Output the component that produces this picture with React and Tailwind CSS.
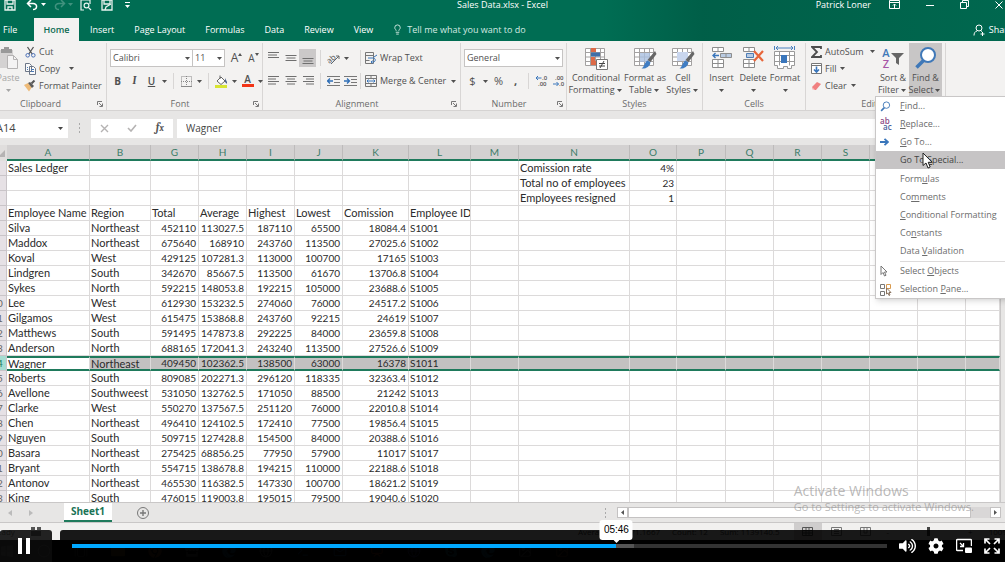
import { useState } from 'react';
import { FaCog, FaVolumeUp, FaWindows, FaChrome, FaEdge, FaFolder, FaSkype, FaStore } from 'react-icons/fa';
import { Circle, GalleryHorizontal, Terminal, Mail, Presentation, Globe, Image, Lightbulb } from 'lucide-react';

const COLUMNS = [
  { name: 'A', width: 'w-[83px]' },
  { name: 'B', width: 'w-[61px]' },
  { name: 'G', width: 'w-[48px]' },
  { name: 'H', width: 'w-[48px]' },
  { name: 'I', width: 'w-[48px]' },
  { name: 'J', width: 'w-[48px]' },
  { name: 'K', width: 'w-[66px]' },
  { name: 'L', width: 'w-[62px]' },
  { name: 'M', width: 'w-[48px]' },
  { name: 'N', width: 'w-[111px]' },
  { name: 'O', width: 'w-[47px]' },
  { name: 'P', width: 'w-[49px]' },
  { name: 'Q', width: 'w-[48px]' },
  { name: 'R', width: 'w-[48px]' },
  { name: 'S', width: 'w-[48px]' },
  { name: 'T', width: 'w-[48px]' },
  { name: 'U', width: 'w-[48px]' },
  { name: 'V', width: '' },
];

const ROWS = [
  ['Sales Ledger', '', '', '', '', '', '', '', '', 'Comission rate', '4%'],
  ['', '', '', '', '', '', '', '', '', 'Total no of employees', '23'],
  ['', '', '', '', '', '', '', '', '', 'Employees resigned', '1'],
  ['Employee Name', 'Region', 'Total', 'Average', 'Highest', 'Lowest', 'Comission', 'Employee ID'],
  ['Silva', 'Northeast', '452110', '113027.5', '187110', '65500', '18084.4', 'S1001'],
  ['Maddox', 'Northeast', '675640', '168910', '243760', '113500', '27025.6', 'S1002'],
  ['Koval', 'West', '429125', '107281.3', '113000', '100700', '17165', 'S1003'],
  ['Lindgren', 'South', '342670', '85667.5', '113500', '61670', '13706.8', 'S1004'],
  ['Sykes', 'North', '592215', '148053.8', '192215', '105000', '23688.6', 'S1005'],
  ['Lee', 'West', '612930', '153232.5', '274060', '76000', '24517.2', 'S1006'],
  ['Gilgamos', 'West', '615475', '153868.8', '243760', '92215', '24619', 'S1007'],
  ['Matthews', 'South', '591495', '147873.8', '292225', '84000', '23659.8', 'S1008'],
  ['Anderson', 'North', '688165', '172041.3', '243240', '113500', '27526.6', 'S1009'],
  ['Wagner', 'Northeast', '409450', '102362.5', '138500', '63000', '16378', 'S1011'],
  ['Roberts', 'South', '809085', '202271.3', '296120', '118335', '32363.4', 'S1012'],
  ['Avellone', 'Southweest', '531050', '132762.5', '171050', '88500', '21242', 'S1013'],
  ['Clarke', 'West', '550270', '137567.5', '251120', '76000', '22010.8', 'S1014'],
  ['Chen', 'Northeast', '496410', '124102.5', '172410', '77500', '19856.4', 'S1015'],
  ['Nguyen', 'South', '509715', '127428.8', '154500', '84000', '20388.6', 'S1016'],
  ['Basara', 'Northeast', '275425', '68856.25', '77950', '57900', '11017', 'S1017'],
  ['Bryant', 'North', '554715', '138678.8', '194215', '110000', '22188.6', 'S1018'],
  ['Antonov', 'Northeast', '465530', '116382.5', '147330', '100700', '18621.2', 'S1019'],
  ['King', 'South', '476015', '119003.8', '195015', '79500', '19040.6', 'S1020'],
];

const SELECTED_ROW = 14;

function Caret({ className = '' }) {
  return (
    <span className={`flex w-[9px] shrink-0 items-center justify-center ${className}`}>
      <svg width="5" height="3" viewBox="0 0 5 3"><path d="M0 0h5L2.5 3z" fill="currentColor" /></svg>
    </span>
  );
}

function Sep() {
  return <span className="mx-1 h-4 w-px shrink-0 bg-[#d8d6d5]" />;
}

function Tool({ label, className = '', children }) {
  return (
    <button type="button" aria-label={label} className={`flex h-[18px] w-[17px] shrink-0 items-center justify-center ${className}`}>
      {children}
    </button>
  );
}

function Group({ title, width, launcher, labelClass = '', children }) {
  return (
    <section className={`flex h-[69px] shrink-0 flex-col pt-[2px] ${width}`}>
      <div className="flex grow border-r border-[#d8d6d5]">{children}</div>
      <div className="flex h-3 items-center border-r border-[#d8d6d5] leading-3 text-[#6b6b6b]">
        <span className={`grow text-center ${labelClass}`}>{title}</span>
        {launcher && (
          <button type="button" aria-label={`${title} settings`} className="mr-[3px]">
            <svg width="6" height="6" viewBox="0 0 6 6" fill="none" stroke="#777"><path d="M.5 4V.5H5M2 2l3 3M5.500 2.500v3h-3" /></svg>
          </button>
        )}
      </div>
    </section>
  );
}

function BigButton({ icon, lines, width, inlineCaret, active }) {
  return (
    <button type="button" className={`flex h-[53px] shrink-0 flex-col items-center pt-[3px] leading-3 ${width} ${active ? 'bg-[#c8c6c6]' : ''}`}>
      {icon}
      <span className="mt-[2px] whitespace-nowrap">{lines[0]}</span>
      <span className="flex h-3 items-center whitespace-nowrap">{lines[1]}<Caret className={inlineCaret ? '' : 'mt-px'} /></span>
    </button>
  );
}

function Picker({ label, value, width }) {
  return (
    <span className={`flex h-[18px] items-center border border-[#c6c4c3] bg-white ${width}`}>
      <select aria-label={label} className="h-4 min-w-0 grow appearance-none bg-transparent pl-[2px] outline-none">
        <option>{value}</option>
      </select>
      <Caret />
    </span>
  );
}

function Lines({ widths, align = 'left', top = 2 }) {
  return (
    <svg width="12" height="12" viewBox="0 0 12 12" stroke="#6f6f6f">
      {widths.map((w, i) => {
        const x = align === 'left' ? 0 : align === 'right' ? 12 - w : (12 - w) / 2;
        return <path key={i} d={`M${x} ${top + i * 2.5 + 0.5}h${w}`} />;
      })}
    </svg>
  );
}

function IndentIcon({ flip }) {
  return (
    <svg width="13" height="12" viewBox="0 0 13 12" fill="none">
      <path d="M0 1.500h13M7 4.500h6M7 7.500h6M0 10.500h13" stroke="#777" />
      <path d={flip ? 'M0 6h5M3 3.500 5.500 6 3 8.500' : 'M1 6h5M3 3.500.500 6 3 8.500'} stroke="#2f6fb7" strokeWidth="1.300" />
    </svg>
  );
}

function PasteIcon() {
  return (
    <svg width="20" height="24" viewBox="0 0 20 24">
      <path d="M1 4h14v18H1z" fill="#d4d2d2" />
      <path d="M3 3h3V1h5v2h3v4H3z" fill="#999" />
      <path d="M9.500 9.500h6l4 4v9h-10z" fill="#f4f3f3" stroke="#b5b3b3" />
      <path d="M15.500 9.500v4h4" fill="none" stroke="#b5b3b3" />
    </svg>
  );
}

function CutIcon() {
  return (
    <svg width="11" height="12" viewBox="0 0 11 12" fill="none">
      <path d="M2.500 1l4.700 7M8.500 1L3.800 8" stroke="#555" strokeWidth="1.300" />
      <circle cx="2.700" cy="9.300" r="1.800" stroke="#4a6fb5" />
      <circle cx="8.300" cy="9.300" r="1.800" stroke="#4a6fb5" />
    </svg>
  );
}

function CopyIcon() {
  return (
    <svg width="11" height="12" viewBox="0 0 11 12" fill="#fafafa" stroke="#6c7687">
      <path d="M.5.5h4l2 2v6h-6zM4.500 3.500h4l2 2v6h-6z" />
      <path d="M2 4.500h1M2 6.500h1M6 6.500h3M6 8.500h3" stroke="#4a7ab8" />
    </svg>
  );
}

function PainterIcon() {
  return (
    <svg width="12" height="12" viewBox="0 0 12 12">
      <path d="M0 5l4-2 4 4-3 4.500z" fill="#edba78" />
      <path d="M4 3l2-1 4 4-2 2z" fill="#5b5b5b" />
      <path d="M7.500 3.500L10.500.500" stroke="#555" strokeWidth="2" />
    </svg>
  );
}

function GridIcon({ children }) {
  return (
    <svg width="24" height="24" viewBox="0 0 24 24" className="h-6 shrink-0">
      <path d="M1.500 2.500h19v17h-19zM6.500 2.500v17M11.500 2.500v17M16.500 2.500v17M1.500 6.500h19M1.500 11h19M1.500 15.500h19" fill="#fff" stroke="#a3a1a1" />
      {children}
    </svg>
  );
}

function Brush() {
  return (
    <>
      <path d="M22 5l1.500 3-6 8-3-2z" fill="#666" />
      <path d="M14.500 14.500l3 2c-1 4-4 6.500-9 6 3-1.500 3-6.500 6-8z" fill="#3f7dc4" />
    </>
  );
}

function CellsIcon({ kind }) {
  return (
    <svg width="24" height="24" viewBox="0 0 24 24" className="h-6 shrink-0" fill="#fff" stroke="#8d8d8d">
      <path d="M2.500 1.500h11v4h-11zM8 1.500v4M2.500 13.500h11v8h-11zM8 13.500v8M2.500 17.500h11" />
      {kind === 'insert' ? (
        <>
          <path d="M10.500 7.500h11v4h-11zM16 7.500v4" fill="#b9cbe2" />
          <path d="M9 9.500H3M5.500 7L3 9.500 5.500 12" fill="none" stroke="#3a76bb" strokeWidth="1.400" />
        </>
      ) : (
        <>
          <path d="M5.500 7.500h7v4h-7z" fill="#b9cbe2" stroke="#4d7db6" />
          <path d="M13 5l9 10M22 5l-9 10" stroke="#e8663a" strokeWidth="2.200" />
        </>
      )}
    </svg>
  );
}

function FormatIcon() {
  return (
    <svg width="24" height="24" viewBox="0 0 24 24" className="h-6 shrink-0" fill="none">
      <path d="M1.500 5.500h20v14h-3v3h-4v-2h-4v2h-6v-3h-3zM6.500 5.500v14M16.500 5.500v14M1.500 9.500h20M1.500 15.500h20" fill="#fff" stroke="#999" />
      <path d="M8 9h6v8H8z" fill="#3a76bb" />
      <path d="M3 2h17M5 0L3 2l2 2M18 0l2 2-2 2M1.500 0v4M21.500 0v4" stroke="#4a80be" />
    </svg>
  );
}

function Magnifier({ size, className = '' }) {
  return (
    <svg width={size} height={size} viewBox="0 0 24 24" className={`shrink-0 ${className}`} fill="none">
      <path d="M10 14l-7.500 7.500" stroke="#3f78b8" strokeWidth="3.600" />
      <circle cx="14" cy="9" r="7" fill="#fff" stroke="#3f78b8" strokeWidth="2" />
    </svg>
  );
}

function SortIcon() {
  return (
    <span className="flex h-6 w-6 shrink-0 items-center">
      <span className="flex w-[10px] flex-col items-center text-[11px] leading-[11px] font-semibold">
        <span className="text-[#3f78b8]">A</span>
        <span className="text-[#a655a5]">Z</span>
      </span>
      <svg width="13" height="13" viewBox="0 0 13 13"><path d="M0 1h13L8 6v7L5 11V6z" fill="#666" /></svg>
    </span>
  );
}

function SaveIcon({ pen }) {
  return (
    <svg width="12" height="12" viewBox="0 0 12 12" fill="none" stroke="#e8f3ef" strokeWidth="1.300">
      <path d="M1 1h10v10H1zM3 1v4h6V1" />
      {pen ? <path d="M4 11l1-3 5-3" /> : <path d="M4 11V8h4v3" />}
    </svg>
  );
}

function TitleBar() {
  return (
    <div className="-mt-[9px] grid h-[27px] grid-cols-[1fr_auto_1fr] items-center whitespace-nowrap text-white">
      <div className="flex items-center pl-1">
        <button type="button" aria-label="Save"><SaveIcon /></button>
        <button type="button" aria-label="Undo" className="ml-[10px]">
          <svg width="12" height="12" viewBox="0 0 12 12" fill="none" stroke="#fff" strokeWidth="1.500"><path d="M5 1L1.500 4.500 5 8M2 4.500h5c5 0 4.500 6 0 6" /></svg>
        </button>
        <Caret className="ml-px" />
        <button type="button" aria-label="Redo" className="ml-[6px] opacity-25">
          <svg width="12" height="12" viewBox="0 0 12 12" fill="none" stroke="#fff" strokeWidth="1.500"><path d="M7 1l3.500 3.500L7 8M10 4.500H5c-5 0-4.500 6 0 6" /></svg>
        </button>
        <Caret className="opacity-25" />
        <button type="button" aria-label="Print preview" className="ml-[5px]">
          <svg width="12" height="12" viewBox="0 0 12 12" fill="none" stroke="#e8f3ef" strokeWidth="1.200"><path d="M4 11H1V1h9v4" /><circle cx="6.500" cy="6.500" r="2.400" /><path d="M8.300 8.300L11 11" /></svg>
        </button>
        <button type="button" aria-label="Save as" className="ml-[9px]"><SaveIcon pen /></button>
        <button type="button" aria-label="Customize toolbar" className="ml-[11px]">
          <svg width="7" height="6" viewBox="0 0 7 6" fill="#fff"><path d="M1 0h5v1H1zM1 3h5L3.500 6z" /></svg>
        </button>
      </div>
      <h1 className="text-[9px]">Sales Data.xlsx - Excel</h1>
      <div className="flex items-center justify-end pr-[2px]">
        <span className="mr-[18px]">Patrick Loner</span>
        <button type="button" aria-label="Ribbon options" className="mr-[26px]">
          <svg width="11" height="9" viewBox="0 0 11 9" fill="none" stroke="#fff"><path d="M.5.5h10v8H.5zM.5 2.500h10M5.500 8V4M4 5.500L5.500 4 7 5.500" /></svg>
        </button>
        <button type="button" aria-label="Minimize" className="mr-[26px]">
          <svg width="8" height="8" viewBox="0 0 8 8" stroke="#fff"><path d="M0 4.500h8" /></svg>
        </button>
        <button type="button" aria-label="Restore" className="mr-[26px]">
          <svg width="9" height="9" viewBox="0 0 9 9" fill="none" stroke="#fff"><path d="M.5 2.500h6v6h-6zM2.500 2V.500h6v6H7" /></svg>
        </button>
        <button type="button" aria-label="Close">
          <svg width="8" height="8" viewBox="0 0 8 8" stroke="#fff"><path d="M.5.500l7 7M7.500.500l-7 7" /></svg>
        </button>
      </div>
    </div>
  );
}

function RibbonTabs() {
  return (
    <nav className="flex h-[23px] items-stretch whitespace-nowrap text-white">
      <button type="button" className="w-[34px] pl-[3px] text-left">File</button>
      <button type="button" className="mr-px w-[45px] bg-[#f3f2f1] font-semibold text-[#0b6b52]">Home</button>
      {['Insert', 'Page Layout', 'Formulas', 'Data', 'Review', 'View'].map((tab) => (
        <button key={tab} type="button" className="px-[10px]">{tab}</button>
      ))}
      <button type="button" className="flex items-center gap-1 pl-[9px] text-[#d3eae2]">
        <Lightbulb className="h-[11px] w-[11px]" /> Tell me what you want to do
      </button>
      <button type="button" className="-mr-2 ml-auto flex items-center gap-1">
        <svg width="12" height="12" viewBox="0 0 12 12" fill="none" stroke="#fff"><circle cx="6" cy="4" r="3" /><path d="M4 7C2 7.500 1 9 1 11.500M8 7l1 .5M9.500 8v4M7.500 10h4" /></svg>
        Share
      </button>
    </nav>
  );
}

function SmallRow({ icon, children, caret }) {
  return (
    <button type="button" className="flex h-[17px] items-center gap-[3px] whitespace-nowrap">
      <span className="flex w-3 justify-center">{icon}</span>
      <span>{children}</span>
      {caret && <Caret className={caret} />}
    </button>
  );
}

// mnemonic letter is wrapped in [ ]
const MENU = [
  { text: '[F]ind...', icon: <Magnifier size={11} /> },
  {
    text: '[R]eplace...',
    icon: (
      <span className="flex flex-col text-[8px] leading-[6px] font-semibold">
        <span className="text-[#8c4a86]">ab</span>
        <span className="pl-[3px] text-[#4b5f9e]">ac</span>
      </span>
    ),
  },
  {
    text: '[G]o To...',
    icon: <svg width="9" height="8" viewBox="0 0 9 8" fill="none" stroke="#3a76bb" strokeWidth="1.800"><path d="M0 4h8M4.500.800L8 4 4.500 7.200" /></svg>,
  },
  { text: 'Go To [S]pecial...', active: true },
  { text: 'Form[u]las', gap: true },
  { text: 'Co[m]ments' },
  { text: '[C]onditional Formatting' },
  { text: 'Co[n]stants' },
  { text: 'Data [V]alidation' },
  {
    text: 'Select [O]bjects',
    rule: true,
    icon: <svg width="8" height="12" viewBox="0 0 8 12" fill="#fff" stroke="#777"><path d="M1 1v8.500l2-2 1.500 3.500 1.500-.700L4.500 7H7z" /></svg>,
  },
  {
    text: 'Selection [P]ane...',
    icon: (
      <svg width="12" height="13" viewBox="0 0 12 13" fill="none">
        <path d="M.5 1.500h4v4h-4zM.5 8.500h4v4h-4z" stroke="#777" />
        <path d="M6.500 1.500h4v4h-4z" stroke="#d99a4e" />
        <path d="M6.500 5v6l1.500-1 1 2.500 1-.5-1-2.500h2z" fill="#fff" stroke="#8a7460" />
      </svg>
    ),
  },
];

function FindMenu() {
  return (
    <div role="menu" className="absolute top-full -left-[34px] z-20 w-[140px] border border-[#c9c7c7] bg-white text-[9px] text-[#6c6c6c] shadow-md">
      {MENU.map(({ text, icon, active, gap, rule }) => {
        const [before, rest] = text.split('[');
        const [key, after] = rest.split(']');
        return (
          <div key={text} className={gap ? 'pt-px' : ''}>
            {rule && <div className="mt-px ml-6 h-px bg-[#dcdada]" />}
            <button type="button" role="menuitem" className={`flex h-[18px] w-full items-center pl-1 text-left whitespace-pre ${active ? 'bg-[#c6c4c5] text-[#444]' : ''}`}>
              <span className="flex w-5 shrink-0 items-center">{icon}</span>
              <span>{before}<u>{key}</u>{after}</span>
            </button>
          </div>
        );
      })}
      <svg width="12" height="18" viewBox="0 0 12 18" className="absolute top-[55px] left-[46px]">
        <path d="M1 1v12.500l3-2.500 2 5 2.200-1-2-4.700h4z" fill="#fff" stroke="#222" />
      </svg>
    </div>
  );
}

function Ribbon() {
  return (
    <div className="flex border-b border-[#d5d3d2] bg-[#f3f2f1] text-[#505050]">
      <Group title="Clipboard" width="w-[107px]" labelClass="pr-4" launcher>
        <div className="-ml-[2px] text-[#a5a5a5]">
          <BigButton icon={<PasteIcon />} lines={['Paste', '']} width="w-[20px]" />
        </div>
        <div className="ml-[6px]">
          <SmallRow icon={<CutIcon />}>Cut</SmallRow>
          <SmallRow icon={<CopyIcon />} caret="ml-1">Copy</SmallRow>
          <SmallRow icon={<PainterIcon />}>Format Painter</SmallRow>
        </div>
      </Group>

      <Group title="Font" width="w-[156px]" launcher>
        <div className="flex flex-col gap-[5px] pt-[6px] pl-[2px]">
          <div className="flex items-center pl-px">
            <Picker label="Font family" value="Calibri" width="w-[83px]" />
            <Picker label="Font size" value="11" width="-ml-px w-[33px]" />
            <Tool label="Increase font size" className="ml-[3px] text-[12px]">
              A<svg width="4" height="10" viewBox="0 0 4 10"><path d="M0 3L2 0l2 3z" fill="#555" /></svg>
            </Tool>
            <Tool label="Decrease font size" className="text-[10px]">
              A<svg width="4" height="10" viewBox="0 0 4 10"><path d="M0 0l2 3 2-3z" fill="#555" /></svg>
            </Tool>
          </div>
          <div className="flex items-center text-[10px]">
            <Tool label="Bold"><b>B</b></Tool>
            <Tool label="Italic"><i className="font-serif text-[11px] font-bold">I</i></Tool>
            <Tool label="Underline" className="font-semibold underline">U</Tool>
            <Caret />
            <Sep />
            <Tool label="Borders">
              <svg width="11" height="11" viewBox="0 0 11 11" fill="none" stroke="#888"><path d="M.5.500h10v10H.5zM5.500 0v11M0 5.500h11" strokeDasharray="1 1" /><path d="M0 10.500h11" /></svg>
            </Tool>
            <Caret />
            <Sep />
            <Tool label="Fill color">
              <svg width="13" height="13" viewBox="0 0 13 13" fill="none"><path d="M2 6l4-4 4 4-4 3.500z" fill="#fff" stroke="#666" /><path d="M5 4V.500" stroke="#666" /><path d="M10 3l2 4v2l-2-2z" fill="#4f648c" /><path d="M0 10h12v3H0z" fill="#d8e534" /></svg>
            </Tool>
            <Caret />
            <Tool label="Font color">
              <span className="flex flex-col items-center text-[10px] leading-[9px] font-semibold">A<span className="h-[3px] w-3 bg-[#f23517]" /></span>
            </Tool>
            <Caret />
          </div>
        </div>
      </Group>

      <Group title="Alignment" width="w-[198px]" launcher>
        <div className="flex flex-col gap-[5px] pt-[6px] pl-[2px]">
          <div className="flex items-center">
            <Tool label="Top align"><Lines widths={[11, 9, 11]} top={0} /></Tool>
            <Tool label="Middle align"><Lines widths={[11, 9, 11]} align="center" top={3} /></Tool>
            <Tool label="Bottom align" className="bg-[#cbc9c9]"><Lines widths={[11, 9, 11]} align="center" top={6} /></Tool>
            <Sep />
            <Tool label="Orientation">
              <svg width="13" height="13" viewBox="0 0 13 13"><text x="0" y="10" fontSize="8" fill="#555" transform="rotate(-40 4 8)">ab</text><path d="M4 12l8-8M9 4h3v3" fill="none" stroke="#666" /></svg>
            </Tool>
            <Caret />
            <span className="w-[5px]" />
            <Sep />
            <SmallRow icon={<svg width="12" height="12" viewBox="0 0 12 12" fill="none"><path d="M.5.500h8v11h-8zM.5 3.500h8M.5 8.500h4" stroke="#777" /><path d="M3 6h5c3 0 3 4 0 4H6M7.500 8.500L6 10l1.500 1.500M9 5l3-2" stroke="#3a76bb" /></svg>}>Wrap Text</SmallRow>
          </div>
          <div className="flex items-center">
            <Tool label="Align left"><Lines widths={[11, 8, 11, 8]} top={1} /></Tool>
            <Tool label="Center"><Lines widths={[11, 8, 11, 8]} align="center" top={1} /></Tool>
            <Tool label="Align right"><Lines widths={[11, 8, 11, 8]} align="right" top={1} /></Tool>
            <Sep />
            <Tool label="Decrease indent"><IndentIcon /></Tool>
            <Tool label="Increase indent"><IndentIcon flip /></Tool>
            <span className="-ml-[3px]" />
            <Sep />
            <SmallRow caret="ml-0" icon={<svg width="12" height="12" viewBox="0 0 12 12" fill="none"><path d="M.5.500h11v11H.5zM.5 3.500h11M.5 8.500h11M6 .500v3M6 8.500v3" stroke="#777" /><path d="M2 6h8M3.500 4.500L2 6l1.500 1.500M8.500 4.500L10 6 8.500 7.500" stroke="#3a76bb" /></svg>}>Merge &amp; Center</SmallRow>
          </div>
        </div>
      </Group>

      <Group title="Number" width="w-[106px]" launcher>
        <div className="flex flex-col gap-[5px] pt-[6px] pl-[3px]">
          <Picker label="Number format" value="General" width="w-[99px]" />
          <div className="flex items-center text-[11px]">
            <Tool label="Currency">$</Tool>
            <Caret />
            <Tool label="Percent">%</Tool>
            <Tool label="Comma" className="font-bold">,</Tool>
            <Sep />
            <Tool label="Increase decimal">
              <svg width="12" height="12" viewBox="0 0 12 12" fontSize="6" fontWeight="600" fill="#555"><text x="6" y="5">.0</text><text x="2" y="11">.00</text><path d="M5.500 3H0M2 1L0 3l2 2" fill="none" stroke="#3a76bb" /></svg>
            </Tool>
            <Tool label="Decrease decimal">
              <svg width="12" height="12" viewBox="0 0 12 12" fontSize="6" fontWeight="600" fill="#555"><text x="2" y="5">.00</text><text x="6" y="11">.0</text><path d="M0 9h5.500M3.500 7l2 2-2 2" fill="none" stroke="#3a76bb" /></svg>
            </Tool>
          </div>
        </div>
      </Group>

      <Group title="Styles" width="w-[136px]">
        <BigButton
          lines={['Conditional', 'Formatting']}
          width="w-[58px]"
          inlineCaret
          icon={(
            <GridIcon>
              <path d="M7 2h5v4H7zM7 11h4v4H7zM7 15h5v4H7z" fill="#dd6b48" />
              <path d="M7 6.500h9v4H7z" fill="#3f6fa8" />
              <path d="M12.500 13.500h11v10h-11z" fill="#fff" stroke="#777" />
              <path d="M15 17.500h6M15 20h6M20 15l-4 7" stroke="#444" />
            </GridIcon>
          )}
        />
        <BigButton lines={['Format as', 'Table']} width="w-[40px]" inlineCaret icon={<GridIcon><path d="M7 7h10v9H7z" fill="#a9bfe0" opacity=".8" /><Brush /></GridIcon>} />
        <BigButton lines={['Cell', 'Styles']} width="w-[36px]" inlineCaret icon={<GridIcon><path d="M6 6h11v9H6z" fill="#c9d6ee" /><Brush /></GridIcon>} />
      </Group>

      <Group title="Cells" width="w-[103px]">
        <span className="w-[3px]" />
        <BigButton lines={['Insert', '']} width="w-[31px]" icon={<CellsIcon kind="insert" />} />
        <BigButton lines={['Delete', '']} width="w-[32px]" icon={<CellsIcon kind="delete" />} />
        <BigButton lines={['Format', '']} width="w-[32px]" icon={<FormatIcon />} />
      </Group>

      <Group title="Editing" width="w-[140px]">
        <div className="w-[71px] pl-1">
          <SmallRow caret="ml-px" icon={<svg width="11" height="12" viewBox="0 0 11 12" fill="none" stroke="#4d4d4d" strokeWidth="1.800"><path d="M10 3V1H1l5 5-5 5h9V9" /></svg>}>AutoSum</SmallRow>
          <SmallRow caret="-ml-px" icon={<svg width="11" height="11" viewBox="0 0 11 11" fill="#fff"><path d="M.5.500h10v10H.5zM.5 2.500h10" stroke="#777" /><path d="M5.500 3.500V9M3 6.500L5.500 9 8 6.500" fill="none" stroke="#3a76bb" strokeWidth="1.600" /></svg>}>Fill</SmallRow>
          <SmallRow caret="-ml-px" icon={<svg width="11" height="10" viewBox="0 0 11 10"><path d="M1 6l5-5 4 2-5 6-3 0z" fill="#f08080" /><path d="M1 6l3 3-2 0z" fill="#f9c6c6" /></svg>}>Clear</SmallRow>
        </div>
        <BigButton lines={['Sort &', 'Filter']} width="w-[32px]" inlineCaret icon={<SortIcon />} />
        <div className="relative h-[53px]">
          <BigButton active lines={['Find &', 'Select']} width="w-[33px]" inlineCaret icon={<Magnifier size={24} className="h-6" />} />
          <FindMenu />
        </div>
      </Group>
    </div>
  );
}

function FormulaBar() {
  const [value, setValue] = useState('Wagner');
  return (
    <div className="flex h-[34px] items-center bg-[#e7e6e5] text-[11px] text-[#444]">
      <div className="flex h-[19px] w-[68px] items-center bg-white">
        <input aria-label="Name box" defaultValue="A14" className="-ml-[4px] w-[60px] bg-transparent outline-none" />
        <Caret />
      </div>
      <svg width="3" height="10" viewBox="0 0 3 10" fill="#aaa" className="mx-[10px] shrink-0"><path d="M1 0h1v2H1zM1 4h1v2H1zM1 8h1v2H1z" /></svg>
      <div className="flex h-[19px] w-[82px] items-center justify-around bg-white text-[#b5b3b3]">
        <button type="button" aria-label="Cancel"><svg width="9" height="9" viewBox="0 0 9 9" stroke="currentColor" strokeWidth="1.400"><path d="M1 1l7 7M8 1L1 8" /></svg></button>
        <button type="button" aria-label="Enter"><svg width="10" height="8" viewBox="0 0 10 8" fill="none" stroke="currentColor" strokeWidth="1.600"><path d="M1 4l3 3 5-6" /></svg></button>
        <button type="button" aria-label="Insert function" className="font-serif leading-3 font-bold text-[#555] italic">f<span className="text-[9px]">x</span></button>
      </div>
      <input aria-label="Formula" value={value} onChange={(e) => setValue(e.target.value)} className="ml-[4px] h-[19px] min-w-0 grow bg-white pl-[9px] text-[10px] outline-none" />
    </div>
  );
}

function cellClass(rowNumber, col) {
  let cls = 'overflow-hidden whitespace-nowrap border-r border-r-[#dcdada] py-0 pl-px pr-[2px]';
  const numeric = (rowNumber > 4 && col >= 2 && col <= 6) || col === 10;
  if (numeric) cls += ' text-right';
  if (numeric || (rowNumber > 4 && col === 7)) cls += ' text-[10px]';
  if (rowNumber === SELECTED_ROW) {
    cls += ' border-y-2 border-y-[#1f7a5c] leading-[11px]';
    if (col > 0) cls += ' bg-[#c3c1c1]';
  } else {
    cls += ' border-b border-b-[#dcdada]';
  }
  return cls;
}

function Sheet() {
  return (
    <div className="flex h-[357px] overflow-hidden bg-[#e7e6e5]">
      <table className="h-max w-full min-w-0 table-fixed border-separate border-spacing-0 bg-white font-[Lato,sans-serif] text-[11px] leading-[14px] text-[#2b2b2b]">
        <colgroup>
          <col className="w-[7px]" />
          {COLUMNS.map((c) => <col key={c.name} className={c.width} />)}
        </colgroup>
        <thead>
          <tr className="h-4">
            <th className="overflow-hidden bg-[#e0dedd] p-0"><svg width="7" height="14" viewBox="0 0 7 14"><path d="M5 4v7H0V9z" fill="#b5b3b3" /></svg></th>
            {COLUMNS.map((c) => (
              <th key={c.name} scope="col" className="border-r border-b-2 border-r-[#bdbbbb] border-b-[#1f7a5c] bg-[#d3d1d1] p-0 text-[10px] font-normal text-[#3b7c68]">{c.name}</th>
            ))}
          </tr>
        </thead>
        <tbody>
          {ROWS.map((row, r) => {
            const number = r + 1;
            return (
              <tr key={number} className="h-[15px]">
                <th scope="row" className={`overflow-hidden border-r border-b border-[#c9c4c8] p-0 text-[10px] font-normal ${number === SELECTED_ROW ? 'bg-[#a5ddd2] text-[#1f7a5c]' : 'bg-[#e6e1e5] text-[#666]'}`}>
                  <span className="-ml-[13px] block w-5 text-center">{number}</span>
                </th>
                {COLUMNS.map((c, i) => <td key={c.name} className={cellClass(number, i)}>{row[i] || ''}</td>)}
              </tr>
            );
          })}
        </tbody>
      </table>
      <div className="w-[5px] shrink-0 border-l border-[#c9c7c7]" />
    </div>
  );
}

function SheetTabs() {
  return (
    <div className="flex h-[21px] items-stretch border-t border-b border-[#c9c7c7] bg-[#e7e6e5]">
      <div className="flex w-16 items-center gap-[17px] pl-2 text-[#bbb]">
        <button type="button" aria-label="Previous sheet"><svg width="4" height="6" viewBox="0 0 4 6" fill="currentColor"><path d="M4 0v6L0 3z" /></svg></button>
        <button type="button" aria-label="Next sheet"><svg width="4" height="6" viewBox="0 0 4 6" fill="currentColor"><path d="M0 0v6l4-3z" /></svg></button>
      </div>
      <button type="button" className="w-12 border-b-2 border-[#1f7a5c] bg-white text-[10px] font-bold text-[#1a7355]">Sheet1</button>
      <button type="button" aria-label="New sheet" className="ml-[25px]">
        <svg width="12" height="12" viewBox="0 0 12 12" fill="none" stroke="#777"><circle cx="6" cy="6" r="5.500" /><path d="M3 6h6M6 3v6" strokeWidth="1.400" /></svg>
      </button>
      <div className="ml-auto flex w-[401px] items-center pr-1">
        <svg width="3" height="10" viewBox="0 0 3 10" fill="#aaa" className="mr-[10px]"><path d="M1 0h1v2H1zM1 4h1v2H1zM1 8h1v2H1z" /></svg>
        <button type="button" aria-label="Scroll left" className="flex h-[11px] w-[11px] items-center justify-center border border-[#c4c2c2] bg-white"><svg width="3" height="5" viewBox="0 0 3 5"><path d="M3 0v5L0 2.500z" fill="#555" /></svg></button>
        <div className="h-[11px] grow border border-[#c4c2c2] bg-white" />
        <div className="h-[11px] w-[19px] bg-[#d9d7d7]" />
        <button type="button" aria-label="Scroll right" className="flex h-[11px] w-[11px] items-center justify-center border border-[#c4c2c2] bg-white"><svg width="3" height="5" viewBox="0 0 3 5"><path d="M0 0v5l3-2.500z" fill="#555" /></svg></button>
      </div>
    </div>
  );
}

function StatusBar() {
  return (
    <div className="flex h-[17px] items-center justify-between bg-[#f1f0ef] text-[8px] text-[#444]">
      <div className="flex items-center gap-4">
        <span className="-ml-[8px]">Ready</span>
        <svg width="11" height="9" viewBox="0 0 11 9" fill="#555"><path d="M0 0h4v3H0zM6 0h4v3H6zM0 4h10v5H0z" /></svg>
      </div>
      <div className="flex items-center">
        <span className="mr-3">Average: 103571.1667</span>
        <span className="mr-3">Count: 12</span>
        <span className="mr-[14px]">Sum: 1139140.5</span>
        <span className="flex h-[17px] w-7 items-center justify-center bg-[#cfcdcd]">
          <svg width="11" height="9" viewBox="0 0 11 9" fill="none" stroke="#555"><path d="M.5.500h10v8H.5zM4 0v9M7 0v9M0 3.500h11M0 6h11" /></svg>
        </span>
        <svg width="11" height="9" viewBox="0 0 11 9" fill="none" stroke="#777" className="ml-[9px]"><path d="M.5.500h10v8H.5zM3 2.500h5M3 4.500h5M3 6.500h5" /></svg>
        <svg width="11" height="9" viewBox="0 0 11 9" fill="none" stroke="#777" className="ml-[18px]"><path d="M.5.500h10v8H.5zM4 0v6h3V0" /></svg>
        <span className="ml-4">-</span>
        <span className="ml-[38px] h-[9px] w-[3px] bg-[#444]" />
        <span className="ml-[38px]">+</span>
        <span className="-mr-[4px] ml-4">100%</span>
      </div>
    </div>
  );
}

const TASKS = [
  [FaWindows, 'text-[#2c2c2c]'],
  [Circle, 'text-[#2c2c2c]'],
  [GalleryHorizontal, 'text-[#2c2c2c]'],
  [FaFolder, 'text-[#5a4612]'],
  [FaChrome, 'text-[#5a2e18]'],
  [FaStore, 'text-[#444]'],
  [FaEdge, 'text-[#12425f]'],
  [Globe, 'text-[#444]'],
  [Terminal, 'text-[#1d3a62]'],
  [Mail, 'text-[#154068]'],
  [Presentation, 'text-[#6a2810]'],
  [Globe, 'text-[#2c2c5a]'],
  [FaSkype, 'text-[#125060]'],
  [FaEdge, 'text-[#1a5068]'],
  [Image, 'text-[#444]'],
  [Image, 'text-[#503020]'],
];

function Taskbar() {
  return (
    <div className="flex h-[22px] items-center gap-[23px] bg-black">
      {TASKS.map(([Icon, color], i) => <Icon key={i} className={`h-[14px] w-[14px] shrink-0 opacity-70 ${color}`} />)}
    </div>
  );
}

// the dark player panels let the taskbar icons shine through a little
function Player() {
  const [playing, setPlaying] = useState(true);
  return (
    <div className="absolute inset-x-0 bottom-0 z-30 flex h-8 gap-2 font-['Liberation_Sans',sans-serif] text-white">
      <button type="button" aria-label={playing ? 'Pause' : 'Play'} onClick={() => setPlaying(!playing)} className="flex w-[52px] items-center justify-center rounded-t-[3px] bg-[#0b0b0b]/90 pr-1">
        <svg width="12" height="16" viewBox="0 0 12 16" fill="#fff"><path d={playing ? 'M0 0h4v16H0zM8 0h4v16H8z' : 'M0 0l12 8-12 8z'} /></svg>
      </button>
      <div className="flex grow items-center gap-3 rounded-tl-[3px] bg-black/90 px-3">
        <div className="relative flex h-1 grow bg-[#333]">
          <div className="bg-[#00a8ff]" style={{ width: '66.8%' }} />
          <div className="relative bg-[#555]" style={{ width: '2.2%' }}>
            <time className="absolute bottom-2 left-0 -translate-x-1/2 rounded-[3px] bg-white px-1 text-[10px] leading-5 text-black">
              05:46
              <svg width="6" height="3" viewBox="0 0 6 3" className="absolute top-full left-1/2 -translate-x-1/2"><path d="M0 0h6L3 3z" fill="#fff" /></svg>
            </time>
          </div>
        </div>
        <button type="button" aria-label="Volume"><FaVolumeUp className="h-[18px] w-[17px]" /></button>
        <button type="button" aria-label="Settings"><FaCog className="h-4 w-4" /></button>
        <button type="button" aria-label="Picture in picture">
          <svg width="16" height="16" viewBox="0 0 16 16" fill="none" stroke="#fff"><path d="M7 12.500H1.500a1 1 0 0 1-1-1v-9a1 1 0 0 1 1-1h13a1 1 0 0 1 1 1V8" strokeWidth="1.500" /><path d="M4 5l3 3M7.500 5v3.500H4" strokeWidth="1.300" /><rect x="9" y="9.500" width="7" height="5.500" rx="1" fill="#fff" stroke="none" /></svg>
        </button>
        <button type="button" aria-label="Full screen" className="-mr-[7px]">
          <svg width="16" height="16" viewBox="0 0 16 16" fill="none" stroke="#fff" strokeWidth="1.700"><path d="M1 5.500V1h4.500M10.500 1H15v4.500M15 10.500V15h-4.500M5.500 15H1v-4.500M1 1l5 5M15 1l-5 5M15 15l-5-5M1 15l5-5" /></svg>
        </button>
      </div>
    </div>
  );
}

export default function App() {
  return (
    <main className="relative min-h-screen overflow-hidden bg-black font-['Open_Sans','Noto_Sans',sans-serif] text-[9px]">
      <header className="overflow-hidden bg-[#006d53] bg-linear-to-r from-transparent from-60% via-[#005b45]/80 via-70% to-[#005b45]/30">
        <TitleBar />
        <RibbonTabs />
      </header>
      <Ribbon />
      <FormulaBar />
      <div className="relative">
        <Sheet />
        <SheetTabs />
        <div className="pointer-events-none absolute right-[31px] bottom-[8px] text-[#8c8a8a]/60">
          <p className="text-[14px] leading-4">Activate Windows</p>
          <p className="text-[11px] leading-4">Go to Settings to activate Windows.</p>
        </div>
      </div>
      <StatusBar />
      <Taskbar />
      <Player />
    </main>
  );
}
